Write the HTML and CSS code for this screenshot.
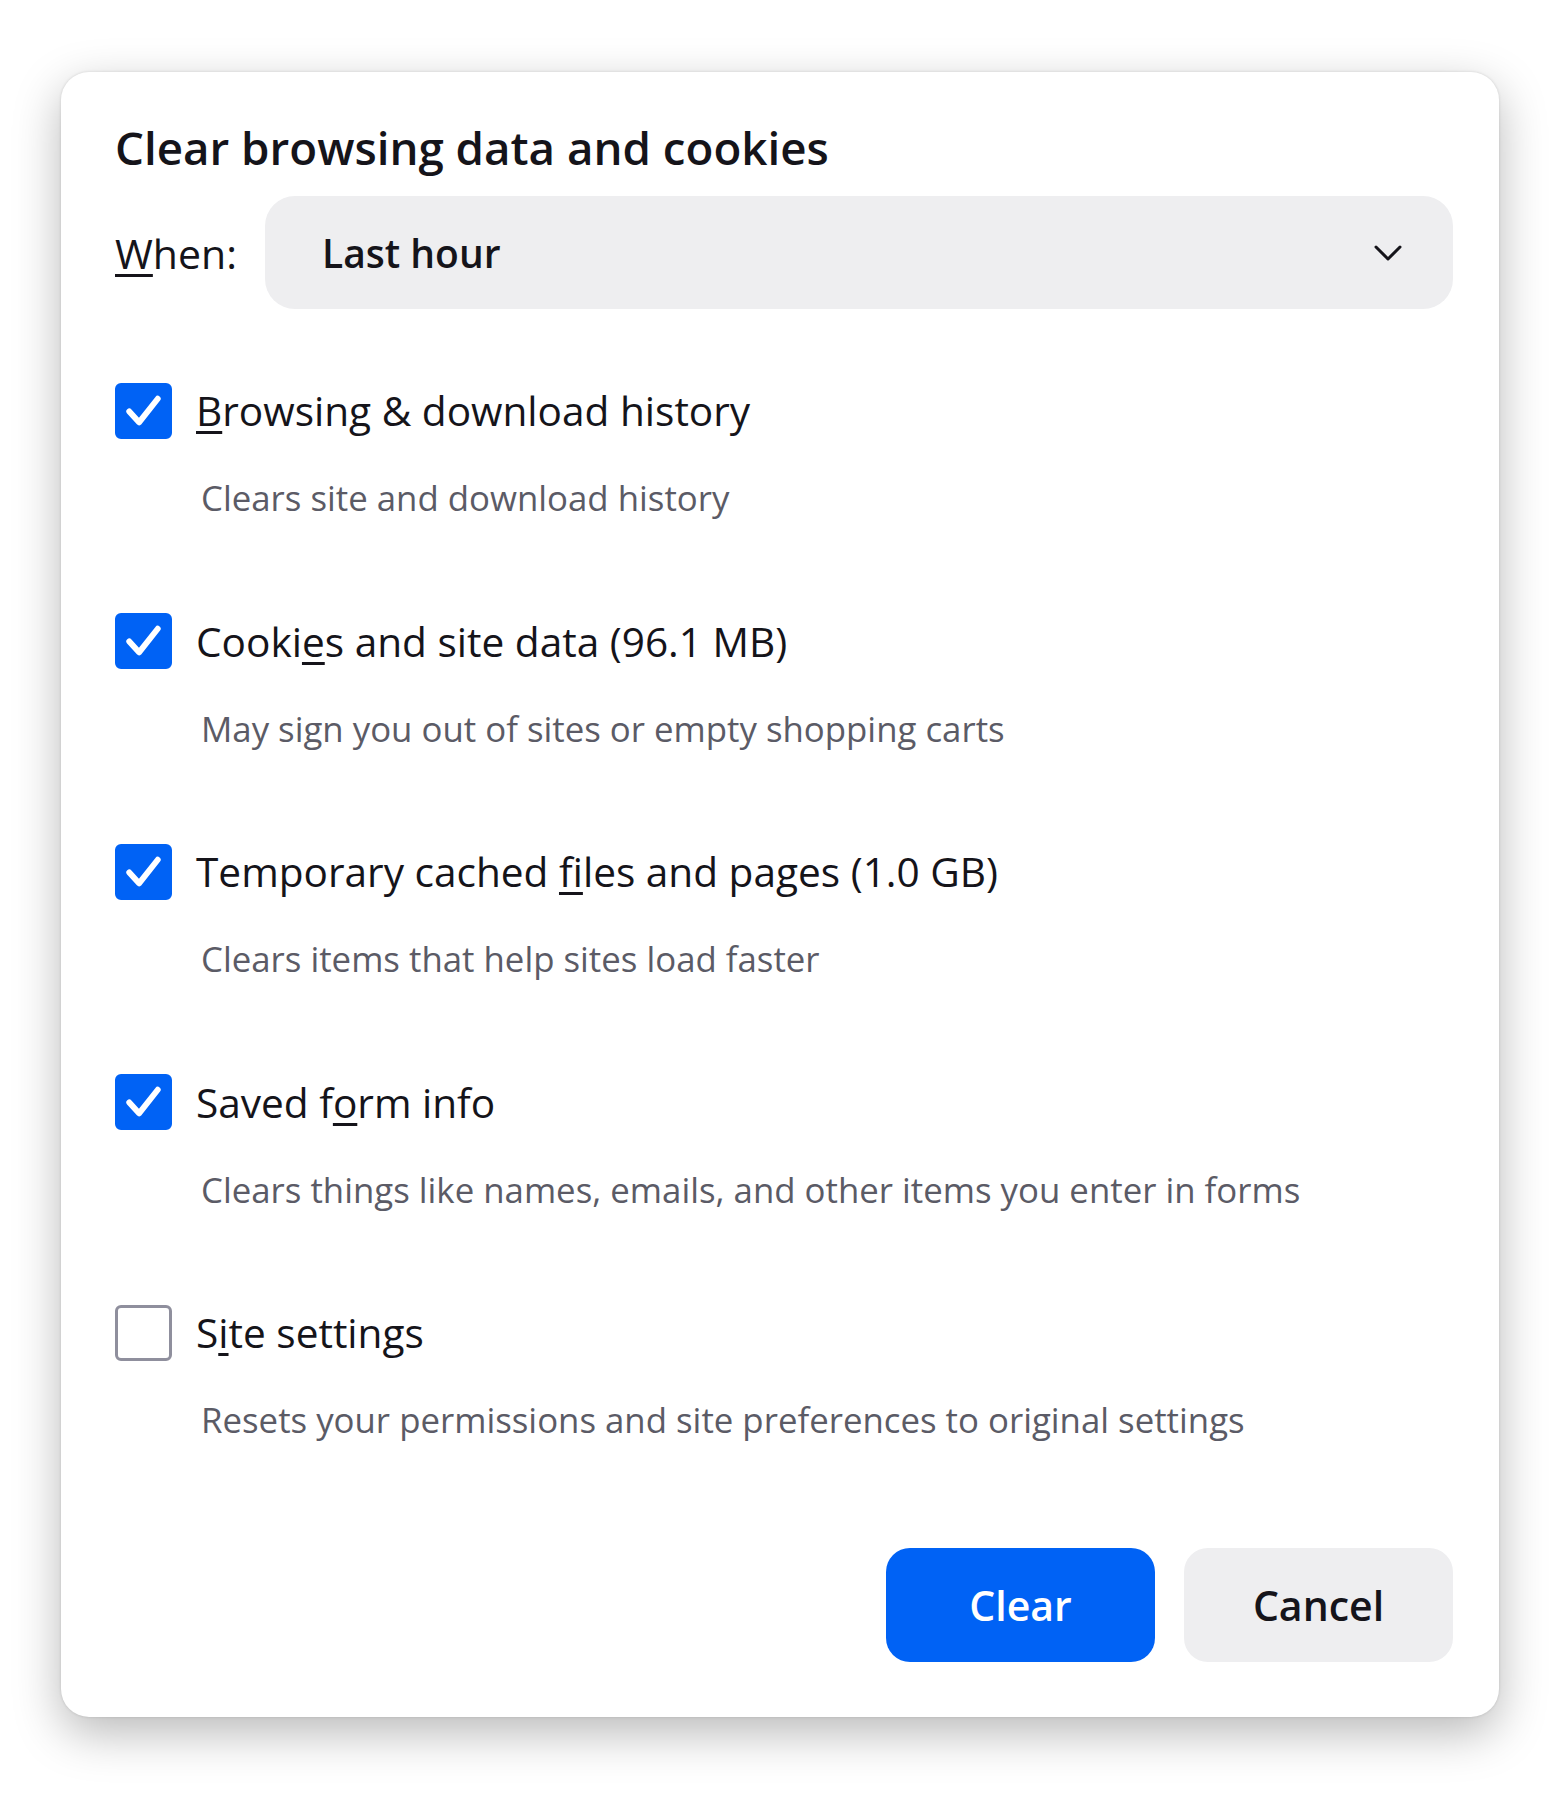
FILE: index.html
```html
<!DOCTYPE html>
<html lang="en">
<head>
<meta charset="utf-8">
<title>Clear browsing data and cookies</title>
<link rel="stylesheet" href="styles.css">
</head>
<body>
<div class="page">
  <div class="dialog">
    <h1 class="title">Clear browsing data and cookies</h1>
    <div class="when-row">
      <span class="when-label"><u>W</u>hen:</span>
      <div class="select">
        <span class="select-value">Last hour</span>
        <svg class="chevron" viewBox="0 0 30 18" aria-hidden="true"><polyline points="3,3 15,15 27,3" fill="none" stroke="#15141a" stroke-width="3" stroke-linecap="round" stroke-linejoin="round"/></svg>
      </div>
    </div>
    <div class="items">
      <div class="item">
        <div class="item-head">
          <span class="box checked"><svg viewBox="0 0 57 57"><polyline points="14,29 24,40 43,16" fill="none" stroke="#fff" stroke-width="6" stroke-linecap="round" stroke-linejoin="round"/></svg></span>
          <span class="label"><u>B</u>rowsing &amp; download history</span>
        </div>
        <div class="desc">Clears site and download history</div>
      </div>
      <div class="item">
        <div class="item-head">
          <span class="box checked"><svg viewBox="0 0 57 57"><polyline points="14,29 24,40 43,16" fill="none" stroke="#fff" stroke-width="6" stroke-linecap="round" stroke-linejoin="round"/></svg></span>
          <span class="label">Cooki<u>e</u>s and site data (96.1 MB)</span>
        </div>
        <div class="desc">May sign you out of sites or empty shopping carts</div>
      </div>
      <div class="item">
        <div class="item-head">
          <span class="box checked"><svg viewBox="0 0 57 57"><polyline points="14,29 24,40 43,16" fill="none" stroke="#fff" stroke-width="6" stroke-linecap="round" stroke-linejoin="round"/></svg></span>
          <span class="label">Temporary cached <u>f</u>iles and pages (1.0 GB)</span>
        </div>
        <div class="desc">Clears items that help sites load faster</div>
      </div>
      <div class="item">
        <div class="item-head">
          <span class="box checked"><svg viewBox="0 0 57 57"><polyline points="14,29 24,40 43,16" fill="none" stroke="#fff" stroke-width="6" stroke-linecap="round" stroke-linejoin="round"/></svg></span>
          <span class="label">Saved f<u>o</u>rm info</span>
        </div>
        <div class="desc">Clears things like names, emails, and other items you enter in forms</div>
      </div>
      <div class="item">
        <div class="item-head">
          <span class="box"></span>
          <span class="label">S<u>i</u>te settings</span>
        </div>
        <div class="desc">Resets your permissions and site preferences to original settings</div>
      </div>
    </div>
    <div class="buttons">
      <button class="btn primary">Clear</button>
      <button class="btn">Cancel</button>
    </div>
  </div>
</div>
</body>
</html>
```

FILE: styles.css
```css
html, body {
  margin: 0;
  padding: 0;
  background: #ffffff;
}
body {
  font-family: "Open Sans", "Noto Sans", sans-serif;
  color: #15141a;
}
.page {
  padding: 72px 61px 81px 61px;
}
.dialog {
  width: 1438px;
  height: 1645px;
  box-sizing: border-box;
  padding: 45px 46px 0 54px;
  background: #ffffff;
  border-radius: 28px;
  box-shadow: 0 16px 48px rgba(0, 0, 0, 0.28), 0 0 3px rgba(0, 0, 0, 0.14);
}
u {
  text-decoration-thickness: 3px;
  text-underline-offset: 5px;
}
.title {
  margin: 0;
  font-size: 45.7px;
  line-height: 60px;
  font-weight: 600;
}
.when-row {
  margin-top: 19px;
  display: flex;
  align-items: center;
  gap: 28px;
}
.when-label {
  font-size: 41px;
}
.select {
  flex: 1;
  height: 113px;
  box-sizing: border-box;
  background: #eeeef0;
  border-radius: 30px;
  display: flex;
  align-items: center;
  justify-content: space-between;
  padding: 0 50px 0 57px;
}
.select-value {
  font-size: 39px;
  font-weight: 600;
}
.chevron {
  width: 30px;
  height: 18px;
}
.items {
  margin-top: 73px;
  display: flex;
  flex-direction: column;
  gap: 92.6px;
}
.item-head {
  display: flex;
  align-items: center;
  gap: 24px;
  height: 57px;
}
.box {
  width: 57px;
  height: 56px;
  box-sizing: border-box;
  border: 3px solid #8f8f9d;
  border-radius: 6px;
  flex: none;
  display: flex;
}
.box.checked {
  background: #0062f5;
  border-color: #0062f5;
}
.box svg {
  width: 57px;
  height: 56px;
  margin: -3px;
}
.label {
  font-size: 40.6px;
  line-height: 57px;
}
.desc {
  margin-top: 37px;
  margin-left: 86px;
  font-size: 34.8px;
  line-height: 44px;
  color: #5b5b66;
}
.buttons {
  margin-top: 106px;
  display: flex;
  justify-content: flex-end;
  gap: 29px;
}
.btn {
  width: 269px;
  height: 114px;
  border: none;
  border-radius: 24px;
  background: #eeeef0;
  color: #15141a;
  font-family: "Open Sans", "Noto Sans", sans-serif;
  font-size: 41px;
  font-weight: 600;
}
.btn.primary {
  background: #0062f5;
  color: #ffffff;
}
```
